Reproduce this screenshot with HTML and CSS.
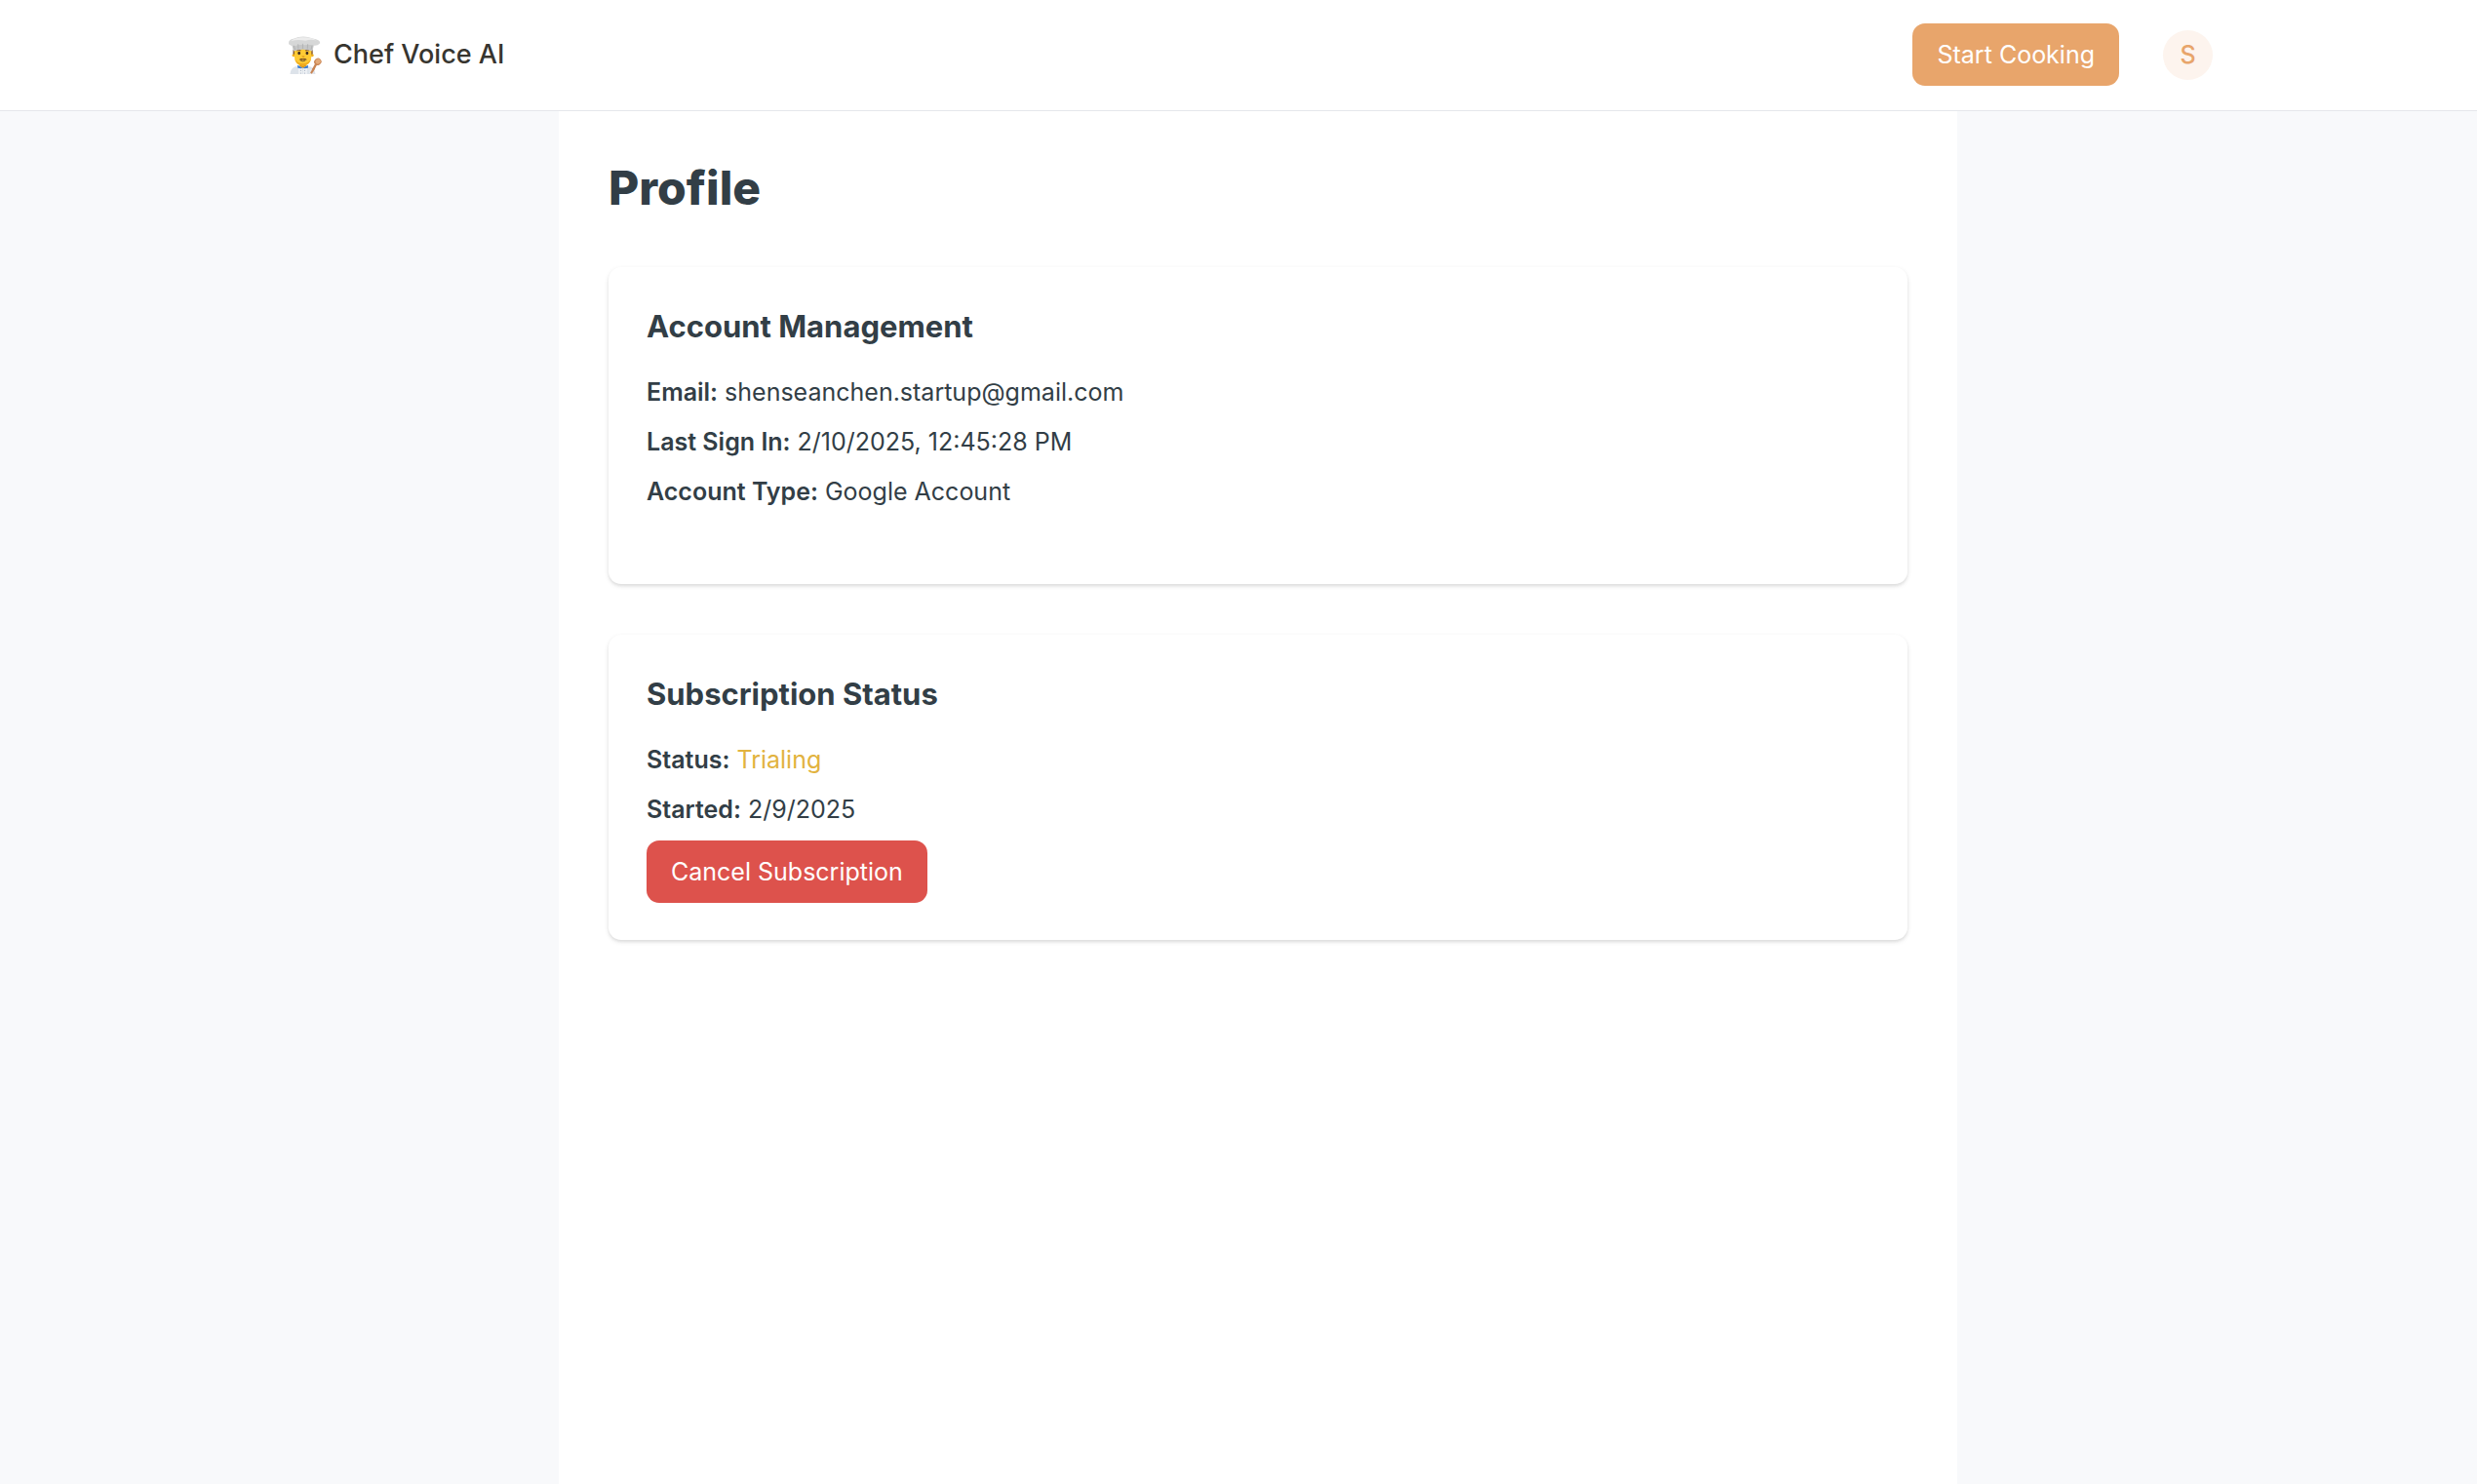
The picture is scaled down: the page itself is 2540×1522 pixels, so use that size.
FILE: index.html
```
<!DOCTYPE html>
<html lang="en">
<head>
  <meta charset="UTF-8" />
  <meta name="viewport" content="width=device-width, initial-scale=1.0" />
  <title>Profile - Chef Voice AI</title>
  <link rel="stylesheet" href="styles.css">
</head>
<body>
  <header class="header">
    <nav class="nav">
      <a href="#" class="brand">
        <svg class="brand-icon" viewBox="30 25 102 114" aria-hidden="true">
          <!-- jacket -->
          <path d="M37 139 Q38 121 53 116 L97 116 Q112 121 113 139 Z" fill="#dde3ea"/>
          <path d="M62 113 L75 125 L88 113 L88 139 L62 139 Z" fill="#eef1f5"/>
          <path d="M59 112 L75 120 L91 112 L91 121 L80 122 L75 119 L70 122 L60 121 Z" fill="#3f7fd0"/>
          <path d="M75 121 V139" stroke="#b9c3d0" stroke-width="1"/>
          <g fill="#8f9cb0">
            <circle cx="69" cy="128" r="1.5"/>
            <circle cx="81" cy="128" r="1.5"/>
            <circle cx="69" cy="136" r="1.5"/>
            <circle cx="81" cy="136" r="1.5"/>
          </g>
          <!-- head -->
          <path d="M65 103 H86 V114 L75 121 L65 114 Z" fill="#dc9715"/>
          <path d="M46 66 H105 V83 L101 86 H49 L46 81 Z" fill="#80512c"/>
          <circle cx="47" cy="83" r="4" fill="#f0ae20"/>
          <circle cx="104" cy="83" r="4" fill="#f0ae20"/>
          <path d="M50 63 H101 V87 Q100 112 75 114 Q51 112 50 87 Z" fill="#ffca34"/>
          <path d="M51 92 Q55 112 75 114 Q96 112 100 92 Q94 106 75 107 Q57 106 51 92 Z" fill="#efab20"/>
          <path d="M57 69 Q63 64 69 69 M83 69 Q89 64 94 69" fill="none" stroke="#80512c" stroke-width="3"/>
          <ellipse cx="64" cy="76" rx="4" ry="5" fill="#3d2b20"/>
          <ellipse cx="88" cy="76" rx="4" ry="5" fill="#3d2b20"/>
          <path d="M73 85 Q76 89 80 85" fill="none" stroke="#d99117" stroke-width="3"/>
          <path d="M64 96 Q69 91 75 93 Q83 91 88 96 Q82 97 76 96 Q70 97 64 96 Z" fill="#6b4324"/>
          <path d="M68 98 Q76 103 83 98" fill="none" stroke="#392d27" stroke-width="2"/>
          <!-- hat -->
          <path d="M42 49 L47 70 Q75 60 104 70 L109 49 Z" fill="#c6c7c7"/>
          <path d="M33 44 Q33 36 47 33 Q75 20 105 32 Q128 36 127 46 Q118 56 106 53 Q93 49 82 52 Q70 48 58 53 Q43 58 33 49 Z" fill="#d6d7d7"/>
          <path d="M39 40 Q54 29 75 29 Q99 28 116 38 Q98 34 83 39 Q61 34 39 40 Z" fill="#ececec"/>
          <path d="M48 53 L52 66 M61 49 L62 64 M75 48 V63 M90 49 L89 64 M103 53 L100 66" stroke="#a9aaab" stroke-width="2"/>
          <!-- spoon -->
          <path d="M99 139 L115 109" stroke="#c98554" stroke-width="7"/>
          <ellipse cx="120" cy="102" rx="11" ry="10" fill="#c98554" transform="rotate(-35 120 102)"/>
          <ellipse cx="121" cy="101" rx="8" ry="7" fill="#e3aa79" transform="rotate(-35 121 101)"/>
          <path d="M94 127 Q100 122 107 127 L108 139 H95 Z" fill="#e6eaef"/>
          <path d="M100 137 L109 121" stroke="#c98554" stroke-width="6"/>
        </svg>
        <span>Chef Voice AI</span>
      </a>
      <div class="nav-actions">
        <button type="button" class="btn btn-primary">Start Cooking</button>
        <button type="button" class="avatar" aria-label="Account menu">S</button>
      </div>
    </nav>
  </header>

  <div class="page">
    <main class="content">
      <h1>Profile</h1>

      <section class="card">
        <h2>Account Management</h2>
        <div class="details details-spaced">
          <p><strong>Email:</strong> shenseanchen.startup@gmail.com</p>
          <p><strong>Last Sign In:</strong> 2/10/2025, 12:45:28 PM</p>
          <p><strong>Account Type:</strong> Google Account</p>
        </div>
      </section>

      <section class="card">
        <h2>Subscription Status</h2>
        <div class="details">
          <p><strong>Status:</strong> <span class="trialing">Trialing</span></p>
          <p><strong>Started:</strong> 2/9/2025</p>
          <button type="button" class="btn btn-danger">Cancel Subscription</button>
        </div>
      </section>
    </main>
  </div>
</body>
</html>
```
FILE: styles.css
```
* {
  box-sizing: border-box;
}
body {
  font-family: Inter, "Liberation Sans", sans-serif;
  font-size: 25px;
  line-height: 38px;
  background: #f8f9fb;
  color: #323e46;
  margin: 0;
  min-height: 100vh;
  display: flex;
  flex-direction: column;
}
h1, h2, p {
  margin: 0;
}
.header {
  background: #fff;
  border-bottom: 1px solid #e5e7eb;
  padding: 24px 24px 25px 48px;
}
.nav {
  max-width: 1974px;
  margin: 0 auto;
  display: flex;
  align-items: center;
  justify-content: space-between;
}
.brand {
  display: flex;
  align-items: center;
  gap: 12px;
  font-size: 27px;
  font-weight: 500;
  color: #37352f;
  text-decoration: none;
}
.brand-icon {
  width: 35px;
  height: 39px;
}
.nav-actions {
  display: flex;
  align-items: center;
  gap: 45px;
}
.btn {
  font: inherit;
  color: #fff;
  border: none;
  border-radius: 13px;
  padding: 13px 25px;
  cursor: pointer;
}
.btn-primary {
  background: #e8a56b;
}
.btn-danger {
  background: #dd524c;
}
.btn:hover {
  opacity: 0.9;
}
.avatar {
  font: inherit;
  font-weight: 500;
  width: 51px;
  height: 51px;
  padding: 0;
  border: none;
  border-radius: 50%;
  background: #fdf4ee;
  color: #e8a56b;
  cursor: pointer;
}
.page {
  flex: 1;
  display: flex;
  justify-content: center;
  padding-left: 40px;
}
.content {
  width: 100%;
  max-width: 1434px;
  background: #fff;
  padding: 50px 51px;
}
h1 {
  font-size: 48px;
  font-weight: 800;
  line-height: 58px;
}
h2 {
  font-size: 31px;
  font-weight: 700;
  line-height: 45px;
  margin-bottom: 26px;
}
.card {
  background: #fff;
  border-radius: 13px;
  box-shadow: 0 2px 5px rgba(0, 0, 0, 0.1), 0 2px 3px rgba(0, 0, 0, 0.06);
  padding: 38px 39px;
  margin-top: 52px;
}
.details {
  display: flex;
  flex-direction: column;
  align-items: flex-start;
  gap: 13px;
}
.details-spaced {
  padding-bottom: 38px;
}
.details strong {
  font-weight: 600;
}
.trialing {
  color: #e2b33f;
}
```
